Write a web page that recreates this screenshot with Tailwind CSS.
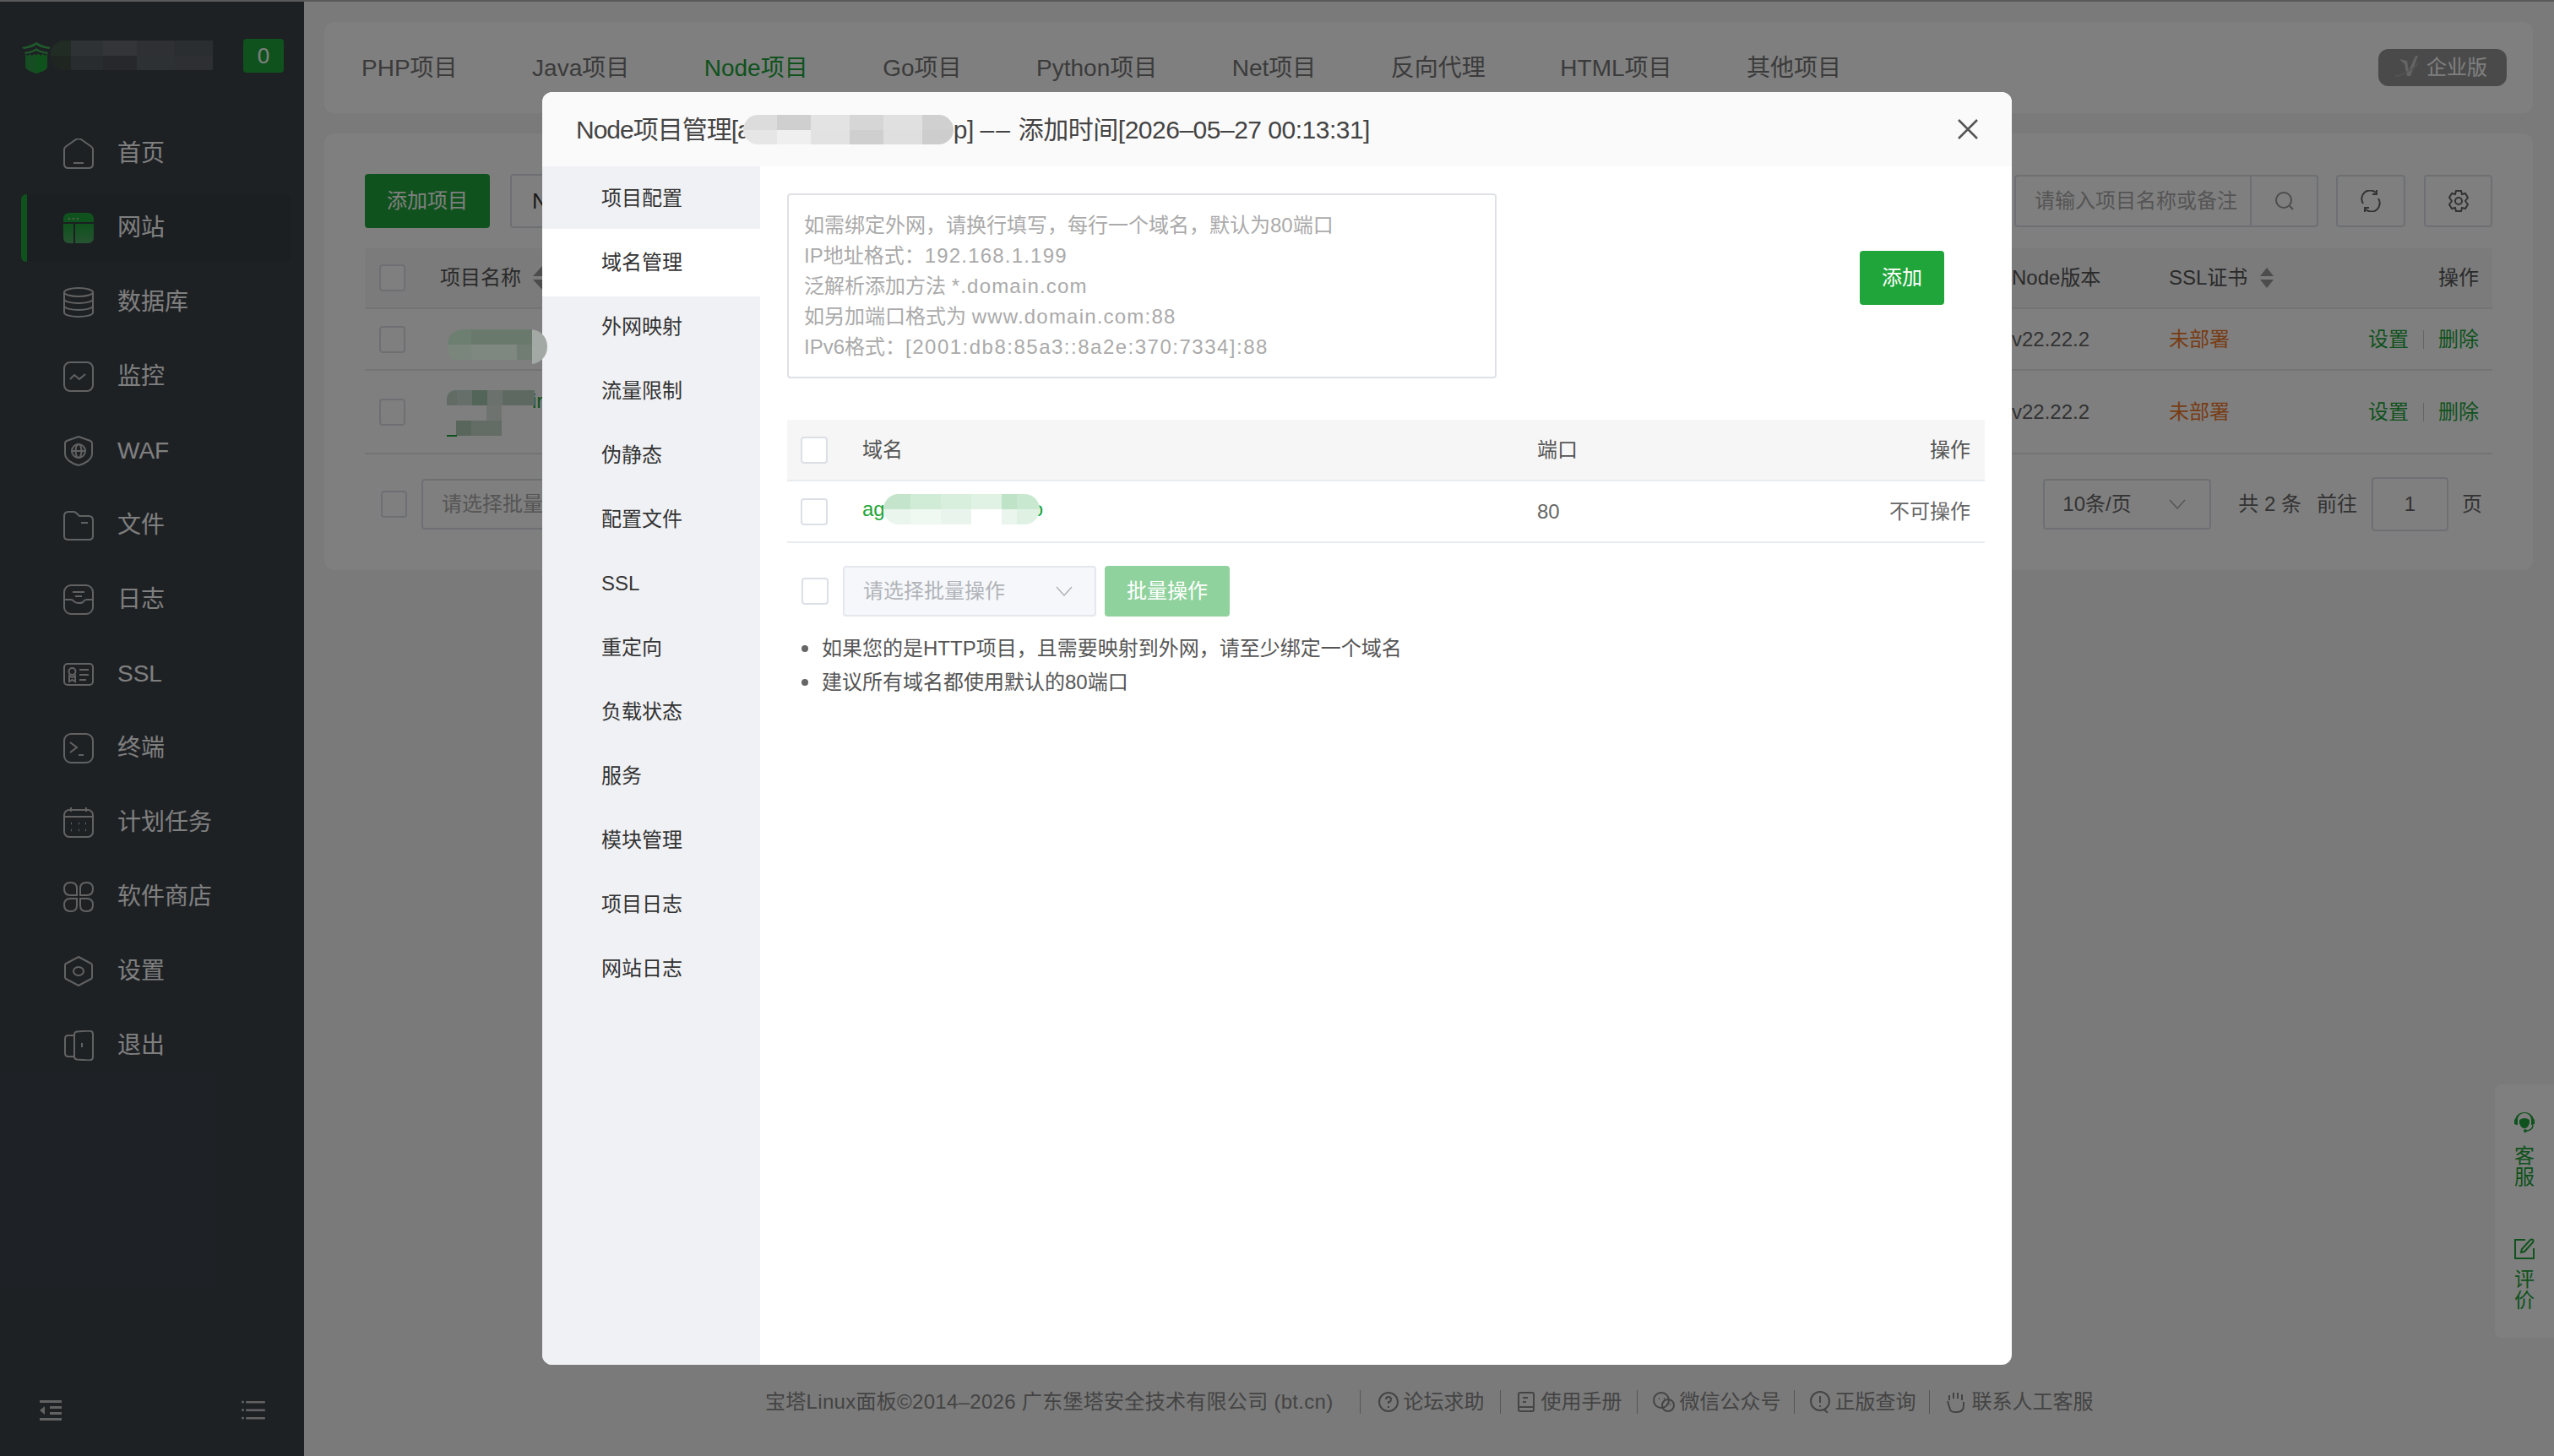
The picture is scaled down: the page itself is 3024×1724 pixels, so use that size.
<!DOCTYPE html>
<html lang="zh-CN">
<head>
  <meta charset="UTF-8" />
  <title>Node项目管理</title>
  <script src="https://cdn.jsdelivr.net/npm/@tailwindcss/browser@4"></script>
</head>
<body class="bg-[#f4f4f4]">
<div class="relative w-[3024px] h-[1724px] overflow-hidden flex font-['Liberation_Sans','Noto_Sans_CJK_SC',sans-serif]">

  <!-- Sidebar -->
  <aside class="w-[360px] h-full shrink-0 bg-[#3c4249] flex flex-col text-white text-[28px]">
    <div class="h-[138px] pl-[25px] pr-[24px] pt-[45px] flex items-start">
      <svg class="w-[36px] h-[42px] shrink-0" viewBox="0 0 36 42">
        <path d="M18 0v5M1 11c7-1 12-3 17-6 5 3 10 5 17 6l-2 2c-6-1-11-2-15-5-4 3-9 4-15 5zM4 17c6-1 10-2 14-5 4 3 8 4 14 5l-1 2c-5-1-9-2-13-4-4 2-8 3-13 4z" fill="#3fb457"/>
        <path d="M5 19l3 2 2-2 3 2 2-2 3 1 3-1 2 2 3-2 2 2 3-2v15c0 3-6 6-13 8-7-2-13-5-13-8z" fill="#2f9a45"/>
        <path d="M18 20l3-1 2 2 3-2 2 2 3-2v15c0 3-6 6-13 8z" fill="#20a53a"/>
      </svg>
      <div class="w-[192px] h-[35px] mt-[3px] -ml-[1px] flex flex-col overflow-hidden rounded-l-[16px]">
        <div class="flex h-[18px]">
          <div class="w-[24px] bg-[#43584b]"></div><div class="w-[38px] bg-[#5f656b]"></div><div class="w-[40px] bg-[#666b71]"></div><div class="w-[44px] bg-[#5c6167]"></div><div class="w-[46px] bg-[#575c62]"></div>
        </div>
        <div class="flex h-[17px]">
          <div class="w-[24px] bg-[#3f4c45]"></div><div class="w-[38px] bg-[#53585e]"></div><div class="w-[40px] bg-[#4c5157]"></div><div class="w-[44px] bg-[#5d6268]"></div><div class="w-[46px] bg-[#5a5f65]"></div>
        </div>
      </div>
      <div class="ml-auto w-[48px] h-[40px] mt-[1px] rounded-[4px] bg-[#20a53a] flex items-center justify-center text-[26px]">0</div>
    </div>

    <nav class="flex flex-col">
      <a class="h-[88px] pl-[75px] flex items-center gap-[28px]">
        <svg class="w-[36px] h-[36px]" viewBox="0 0 36 36" fill="none" stroke="#c4c4c4" stroke-width="2"><path d="M1 13q0-2 2-3.500l12-8.500q3-1.500 6 0l12 8.500q2 1.500 2 3.500v17q0 5-5 5h-24q-5 0-5-5z"/><path d="M12 29h12"/></svg>
        <span>首页</span>
      </a>
      <a class="relative h-[88px] pl-[75px] flex items-center gap-[28px]">
        <div class="absolute left-[25px] top-[4px] w-[7px] h-[80px] rounded-l-[6px] bg-[#20a53a]"></div>
        <div class="absolute left-[32px] top-[4px] w-[312px] h-[80px] rounded-r-[6px] bg-[#383e45]"></div>
        <svg class="relative w-[36px] h-[36px]" viewBox="0 0 36 36"><defs><linearGradient id="gw" x1="0" y1="0" x2="0" y2="1"><stop offset="0" stop-color="#20a53a"/><stop offset="1" stop-color="#4ea663"/></linearGradient></defs><path d="M0 11v-3q0-8 8-8h20q8 0 8 8v3z" fill="#20a53a"/><path d="M0 13h12v23h-5q-7 0-7-7zM14 13h22v16q0 7-7 7h-15z" fill="url(#gw)"/><circle cx="7" cy="7" r="1" fill="#ccc"/><circle cx="12" cy="7" r="1" fill="#ccc"/><circle cx="17" cy="7" r="1" fill="#ccc"/></svg>
        <span class="relative">网站</span>
      </a>
      <a class="h-[88px] pl-[75px] flex items-center gap-[28px]">
        <svg class="w-[36px] h-[36px]" viewBox="0 0 36 36" fill="none" stroke="#c4c4c4" stroke-width="2"><ellipse cx="18" cy="6" rx="17" ry="5"/><path d="M1 6v24c0 3 8 5 17 5s17-2 17-5v-24M1 14c0 3 8 5 17 5s17-2 17-5M1 22c0 3 8 5 17 5s17-2 17-5"/></svg>
        <span>数据库</span>
      </a>
      <a class="h-[88px] pl-[75px] flex items-center gap-[28px]">
        <svg class="w-[36px] h-[36px]" viewBox="0 0 36 36" fill="none" stroke="#c4c4c4" stroke-width="2"><rect x="1" y="1" width="34" height="34" rx="7"/><path d="M8 21l5-5 6 5 7-6"/></svg>
        <span>监控</span>
      </a>
      <a class="h-[88px] pl-[75px] flex items-center gap-[28px]">
        <svg class="w-[36px] h-[36px]" viewBox="0 0 36 36" fill="none" stroke="#c4c4c4" stroke-width="2"><path d="M18 1l14 5q2 1 2 3v12c0 7-8 12-16 14-8-2-16-7-16-14v-12q0-2 2-3z"/><circle cx="18" cy="18" r="8"/><ellipse cx="18" cy="18" rx="3.500" ry="8"/><path d="M10 18h16"/></svg>
        <span>WAF</span>
      </a>
      <a class="h-[88px] pl-[75px] flex items-center gap-[28px]">
        <svg class="w-[36px] h-[36px]" viewBox="0 0 36 36" fill="none" stroke="#c4c4c4" stroke-width="2"><path d="M1 7q0-5 5-5h6q2 0 4 2l3 3h11q5 0 5 5v19q0 4-5 4h-24q-5 0-5-4z"/><path d="M21 15h8"/></svg>
        <span>文件</span>
      </a>
      <a class="h-[88px] pl-[75px] flex items-center gap-[28px]">
        <svg class="w-[36px] h-[36px]" viewBox="0 0 36 36" fill="none" stroke="#c4c4c4" stroke-width="2"><rect x="1" y="1" width="34" height="34" rx="8"/><path d="M1 18h8q2 0 3.500 2t6 2 5.500-2 4-2h7M11 9h14M14 14h8"/></svg>
        <span>日志</span>
      </a>
      <a class="h-[88px] pl-[75px] flex items-center gap-[28px]">
        <svg class="w-[36px] h-[36px]" viewBox="0 0 36 36" fill="none" stroke="#c4c4c4" stroke-width="2"><rect x="1" y="6" width="34" height="25" rx="4"/><circle cx="10.500" cy="15" r="4"/><path d="M7 27v-7l3.500 2 3.500-2v7l-3.500-2zM19 13h11M19 19h11M19 25h8"/></svg>
        <span>SSL</span>
      </a>
      <a class="h-[88px] pl-[75px] flex items-center gap-[28px]">
        <svg class="w-[36px] h-[36px]" viewBox="0 0 36 36" fill="none" stroke="#c4c4c4" stroke-width="2"><rect x="1" y="1" width="34" height="34" rx="8"/><path d="M8 11l8 6-8 6M18 26h6"/></svg>
        <span>终端</span>
      </a>
      <a class="h-[88px] pl-[75px] flex items-center gap-[28px]">
        <svg class="w-[36px] h-[36px]" viewBox="0 0 36 36" fill="none" stroke="#c4c4c4" stroke-width="2"><rect x="1" y="3" width="34" height="32" rx="6"/><path d="M1 11h34M9 0v5M27 0v5"/><path d="M9 19h1M18 19h1M26 19h1M9 27h1M18 27h1M26 27h1" stroke-width="2.500"/></svg>
        <span>计划任务</span>
      </a>
      <a class="h-[88px] pl-[75px] flex items-center gap-[28px]">
        <svg class="w-[36px] h-[36px]" viewBox="0 0 36 36" fill="none" stroke="#c4c4c4" stroke-width="2"><path d="M8 1h1q7 0 7 7v8h-8q-7 0-7-7.500t7-7.500zM28 1h-1q-7 0-7 7v8h8q7 0 7-7.500t-7-7.500zM8 35h1q7 0 7-7v-8h-8q-7 0-7 7.500t7 7.500zM28 35h-1q-7 0-7-7v-8h8q7 0 7 7.500t-7 7.500z"/></svg>
        <span>软件商店</span>
      </a>
      <a class="h-[88px] pl-[75px] flex items-center gap-[28px]">
        <svg class="w-[36px] h-[36px]" viewBox="0 0 36 36" fill="none" stroke="#c4c4c4" stroke-width="2"><path d="M18 1l15 8q1 .5 1 2v14q0 1.500-1 2l-15 8-15-8q-1-.5-1-2v-14q0-1.500 1-2z"/><ellipse cx="18" cy="18" rx="6" ry="5"/></svg>
        <span>设置</span>
      </a>
      <a class="h-[88px] pl-[75px] flex items-center gap-[28px]">
        <svg class="w-[36px] h-[36px]" viewBox="0 0 36 36" fill="none" stroke="#c4c4c4" stroke-width="2"><path d="M13 6h-7q-4 0-4 4v17q0 4 4 4h7"/><path d="M13 5q0-3 3-3.500l14-1q5 0 5 4v27q0 4-5 4l-14-1q-3-.5-3-3z"/><path d="M22 15v5"/></svg>
        <span>退出</span>
      </a>
    </nav>

    <div class="mt-auto h-[66px] pl-[47px] pr-[46px] flex justify-between items-start">
      <svg class="w-[26px] h-[24px]" viewBox="0 0 26 24" fill="#c4c4c4"><rect width="26" height="3"/><rect y="21" width="26" height="3"/><rect x="12" y="7" width="14" height="3"/><rect x="12" y="14" width="14" height="3"/><path d="M6 7v10l-6-5z"/></svg>
      <svg class="w-[28px] h-[24px]" viewBox="0 0 28 24" fill="#c4c4c4"><rect x="5" y="1" width="23" height="2.500" rx="1"/><rect x="5" y="10.500" width="23" height="2.500" rx="1"/><rect x="5" y="20" width="23" height="2.500" rx="1"/><circle cx="1.500" cy="2" r="1.500"/><circle cx="1.500" cy="11.500" r="1.500"/><circle cx="1.500" cy="21" r="1.500"/></svg>
    </div>
  </aside>

  <!-- Page behind the dialog -->
  <main class="flex-1 pl-[24px] pr-[25px] pt-[26px] flex flex-col gap-[24px] text-[24px] text-[#666]">
    <div class="h-[108px] bg-white rounded-[12px] pl-[44px] pr-[31px] flex items-center justify-between">
      <div class="flex gap-[88.5px] pt-[2px] text-[28px] text-[#777]">
        <span>PHP项目</span><span>Java项目</span><span class="text-[#20a53a]">Node项目</span><span>Go项目</span><span>Python项目</span><span>Net项目</span><span>反向代理</span><span>HTML项目</span><span>其他项目</span>
      </div>
      <div class="w-[152px] h-[44px] pr-[4px] rounded-[12px] bg-[#959595] flex items-center justify-center gap-[8px] text-white text-[24px]">
        <svg class="w-[30px] h-[28px]" viewBox="0 0 30 28"><path d="M6 4l9 2 2 12 8-18h3l-9 24h-4l-3-14z" fill="#c8c8c8"/><path d="M1 24c6 0 20-6 27-15" fill="none" stroke="#aaa" stroke-width="1.500"/></svg>
        <span>企业版</span>
      </div>
    </div>

    <div class="h-[517px] bg-white rounded-[12px] px-[48px] pt-[48px]">
      <div class="flex items-center h-[64px]">
        <div class="w-[148px] h-[64px] rounded-[4px] bg-[#20a53a] text-white flex items-center justify-center">添加项目</div>
        <div class="ml-[24px] h-[64px] w-[120px] border-2 border-[#dcdfe6] rounded-[4px] pl-[24px] flex items-center text-[#333] text-[26px]">N</div>
        <div class="ml-auto w-[360px] h-[62px] border-2 border-[#dcdfe6] rounded-[4px] flex items-center">
          <span class="w-[277px] pl-[22px] text-[#aaa]">请输入项目名称或备注</span>
          <div class="flex-1 h-full border-l-2 border-[#dcdfe6] flex items-center justify-center">
            <svg class="w-[24px] h-[24px]" viewBox="0 0 24 24" fill="none" stroke="#999" stroke-width="2"><circle cx="11" cy="11" r="9"/><path d="M18 18l4 4"/></svg>
          </div>
        </div>
        <div class="ml-[21px] w-[82px] h-[62px] border-2 border-[#dcdfe6] rounded-[4px] flex items-center justify-center">
          <svg class="w-[26px] h-[26px]" viewBox="0 0 26 26" fill="none" stroke="#666" stroke-width="2"><path d="M4 16a10 10 0 0 1 15-13M22 10a10 10 0 0 1-15 13"/><path d="M20 0v5h-5M6 26v-5h5"/></svg>
        </div>
        <div class="ml-[22px] w-[81px] h-[62px] border-2 border-[#dcdfe6] rounded-[4px] flex items-center justify-center">
          <svg class="w-[28px] h-[28px]" viewBox="0 0 28 28" fill="none" stroke="#666" stroke-width="2"><path d="M11 2h6l1 4 4-1 3 5-3 4 3 4-3 5-4-1-1 4h-6l-1-4-4 1-3-5 3-4-3-4 3-5 4 1z"/><circle cx="14" cy="14" r="4"/></svg>
        </div>
      </div>

      <div class="mt-[24px] h-[72px] bg-[#f6f6f6] border-b-2 border-[#e9e9ee] grid grid-cols-[89px_1861px_186px_1fr_auto] items-center text-[#555]">
        <div class="pl-[17px]"><div class="w-[31px] h-[32px] border-2 border-[#dcdfe6] rounded-[4px] bg-white"></div></div>
        <span class="flex items-center gap-[13px]">项目名称
          <svg class="w-[24px] h-[28px]" viewBox="0 0 24 28" fill="#999"><path d="M12 0l11 12h-22zM12 28l-11-12h22z"/></svg>
        </span>
        <span>Node版本</span>
        <span class="flex items-center gap-[14px]">SSL证书
          <svg class="w-[18px] h-[24px]" viewBox="0 0 18 24" fill="#999"><path d="M9 0l8 10h-16zM9 24l-8-10h16z"/></svg>
        </span>
        <span class="pr-[16px]">操作</span>
      </div>
      <div class="h-[73px] border-b-2 border-[#e9e9ee] grid grid-cols-[89px_1861px_186px_1fr_auto] items-center">
        <div class="pl-[17px]"><div class="w-[31px] h-[32px] border-2 border-[#dcdfe6] rounded-[4px]"></div></div>
        <span></span><span>v22.22.2</span><span class="text-[#f0782a]">未部署</span>
        <span class="pr-[16px] text-[#20a53a] flex items-center">设置<i class="mx-[17px] w-px h-[22px] bg-[#ccc]"></i>删除</span>
      </div>
      <div class="h-[99px] border-b-2 border-[#e9e9ee] grid grid-cols-[89px_1861px_186px_1fr_auto] items-center">
        <div class="pl-[17px]"><div class="w-[31px] h-[32px] border-2 border-[#dcdfe6] rounded-[4px]"></div></div>
        <div class="relative h-full">
          <span class="absolute left-[109px] top-[18px] text-[#20a53a]">ir</span>
          <div class="absolute left-[8px] top-[23px] w-[104px] h-[18px] flex overflow-hidden rounded-tl-[10px]">
            <div class="w-[12px] bg-[#c4d8c9]"></div><div class="w-[18px] bg-[#cddfd2]"></div><div class="w-[18px] bg-[#a7cbb1]"></div><div class="w-[18px] bg-[#d6e4da]"></div><div class="w-[38px] bg-[#bdd4c3]"></div>
          </div>
          <div class="absolute left-[55px] top-[41px] w-[18px] h-[18px] bg-[#dee7e0]"></div>
          <div class="absolute left-[19px] top-[59px] w-[54px] h-[18px] flex"><div class="w-[18px] bg-[#b2ccb9]"></div><div class="w-[36px] bg-[#c6d9cb]"></div></div>
          <div class="absolute left-[8px] top-[76px] w-[12px] h-[2px] bg-[#20a53a]"></div>
        </div>
        <span>v22.22.2</span><span class="text-[#f0782a]">未部署</span>
        <span class="pr-[16px] text-[#20a53a] flex items-center">设置<i class="mx-[17px] w-px h-[22px] bg-[#ccc]"></i>删除</span>
      </div>

      <div class="mt-[27px] flex items-center">
        <div class="ml-[19px] w-[31px] h-[32px] border-2 border-[#dcdfe6] rounded-[4px]"></div>
        <div class="ml-[17px] w-[300px] h-[60px] border-2 border-[#dcdfe6] rounded-[4px] pl-[22px] flex items-center text-[#aaa]">请选择批量操作</div>
        <div class="ml-auto w-[199px] h-[60px] border-2 border-[#dcdfe6] rounded-[4px] pl-[21px] pr-[28px] flex items-center justify-between">
          <span>10条/页</span>
          <svg class="w-[20px] h-[12px]" viewBox="0 0 20 12" fill="none" stroke="#aaa" stroke-width="1.500"><path d="M1 1l9 10 9-10"/></svg>
        </div>
        <span class="ml-[32px]">共 2 条</span>
        <span class="ml-[18px]">前往</span>
        <div class="ml-[17px] w-[91px] h-[64px] border-2 border-[#dcdfe6] rounded-[4px] flex items-center justify-center">1</div>
        <span class="ml-[16px] mr-[12px]">页</span>
      </div>
    </div>

    <!-- Footer -->
    <div class="mt-auto h-[78px] pl-[522px] flex items-start text-[#888]">
      <span class="tracking-[0.3px] h-[28px] flex items-center">宝塔Linux面板©2014&#8211;2026 广东堡塔安全技术有限公司 (bt.cn)</span>
      <span class="ml-[31px] h-[28px] border-l border-[#aaa] pl-[21px] flex items-center gap-[6px]">
        <svg class="w-[24px] h-[24px]" viewBox="0 0 24 24" fill="none" stroke="#888" stroke-width="2"><circle cx="12" cy="12" r="11"/><path d="M9 9q0-3 3-3t3 3-3 3v2M12 17v2"/></svg>论坛求助</span>
      <span class="ml-[18px] h-[28px] border-l border-[#aaa] pl-[20px] flex items-center gap-[8px]">
        <svg class="w-[20px] h-[24px]" viewBox="0 0 20 24" fill="none" stroke="#888" stroke-width="2"><rect x="1" y="1" width="18" height="22" rx="2"/><path d="M1 18h18M6 7h6M6 12h4"/></svg>使用手册</span>
      <span class="ml-[17px] h-[28px] border-l border-[#aaa] pl-[18px] flex items-center gap-[6px]">
        <svg class="w-[26px] h-[24px]" viewBox="0 0 26 24" fill="none" stroke="#888" stroke-width="2"><circle cx="10" cy="10" r="9"/><circle cx="18" cy="16" r="7"/><path d="M7 8h1M13 8h1M16 15h1M20 15h1"/></svg>微信公众号</span>
      <span class="ml-[15px] h-[28px] border-l border-[#aaa] pl-[18px] flex items-center gap-[6px]">
        <svg class="w-[24px] h-[26px]" viewBox="0 0 24 26" fill="none" stroke="#888" stroke-width="2"><circle cx="12" cy="12" r="11"/><path d="M12 6v8M12 17v2M17 22l4 4"/></svg>正版查询</span>
      <span class="ml-[15px] h-[28px] border-l border-[#aaa] pl-[18px] flex items-center gap-[6px]">
        <svg class="w-[26px] h-[26px]" viewBox="0 0 26 26" fill="none" stroke="#888" stroke-width="2"><path d="M5 11v-6M10 9v-7M15 9v-7M20 11v-7M3 12l3 10q1 3 6 3h2q8 0 8-8v-4"/></svg>联系人工客服</span>
    </div>

    <!-- Floating side tab -->
    <div class="absolute right-0 top-[1284px] w-[70px] h-[300px] bg-white rounded-l-[8px] pt-[32px] flex flex-col items-center text-[24px] leading-[25px] text-[#20a53a]">
      <svg class="w-[26px] h-[26px]" viewBox="0 0 26 26"><path d="M13 1a12 12 0 0 0-11 8l-1 1v5l3 1h1v-6a8 8 0 0 1 16 0v6h1l3-1v-5l-1-1a12 12 0 0 0-11-8z" fill="#20a53a"/><path d="M7 10q6-4 12 0v4q-2 6-6 6t-6-6z" fill="#20a53a"/><path d="M23 16q0 6-7 7" fill="none" stroke="#20a53a" stroke-width="1.500"/><circle cx="14" cy="23" r="2" fill="#20a53a"/></svg>
      <span class="mt-[14px]">客</span><span>服</span>
      <svg class="mt-[60px] w-[26px] h-[26px]" viewBox="0 0 26 26" fill="none" stroke="#20a53a" stroke-width="2"><path d="M14 2h-12v22h22v-12"/><path d="M9 17l1-4 10-11q2-1 3 0t0 3l-10 11z"/></svg>
      <span class="mt-[10px]">评</span><span>价</span>
    </div>
  </main>

  <!-- Dim layer -->
  <div class="absolute inset-0 bg-black/50"></div>
  <div class="absolute left-0 top-0 w-full h-[2px] bg-[#5a5a5a]"></div>

  <!-- Blur over the first project name, it overlaps the dialog -->
  <div class="absolute z-20 left-[530px] top-[390px] w-[118px] h-[41px] rounded-r-[20px] rounded-l-[18px] overflow-hidden flex">
    <div class="w-[100px] flex flex-col">
      <div class="flex h-[18px]"><div class="w-[28px] bg-[#6d7f71]"></div><div class="w-[72px] bg-[#697a6d]"></div></div>
      <div class="flex h-[18px]"><div class="w-[28px] bg-[#7a857c]"></div><div class="w-[54px] bg-[#7f8880]"></div><div class="w-[18px] bg-[#717d73]"></div></div>
    </div>
    <div class="flex-1 bg-[#a3a9a4]"></div>
  </div>

  <!-- Dialog -->
  <div class="absolute z-10 left-[642px] top-[109px] w-[1740px] h-[1507px] bg-white rounded-[12px] overflow-hidden flex flex-col">
    <div class="h-[88px] shrink-0 bg-[#fafafa] pl-[40px] pr-[40px] flex items-center justify-between text-[30px] text-[#444]">
      <div class="flex items-center">
        <span class="tracking-[-1px]">Node项目管理[a</span>
        <div class="-ml-[9px] w-[249px] h-[35px] rounded-[18px] overflow-hidden flex flex-col">
          <div class="flex h-[18px]"><div class="w-[40px] bg-[#dcdcdc]"></div><div class="w-[40px] bg-[#cfcfcf]"></div><div class="w-[46px] bg-[#e3e3e3]"></div><div class="w-[40px] bg-[#d6d6d6]"></div><div class="w-[46px] bg-[#e0e0e0]"></div><div class="w-[37px] bg-[#d0d0d0]"></div></div>
          <div class="flex h-[17px]"><div class="w-[40px] bg-[#e6e6e6]"></div><div class="w-[40px] bg-[#efefef]"></div><div class="w-[46px] bg-[#e2e2e2]"></div><div class="w-[40px] bg-[#cfcfcf]"></div><div class="w-[46px] bg-[#dfdfdf]"></div><div class="w-[37px] bg-[#cdcdcd]"></div></div>
        </div>
        <span class="tracking-[-0.5px]">p] <span class="tracking-[2px]">&#8211;&#8211;</span> 添加时间[2026&#8211;05&#8211;27 00:13:31]</span>
      </div>
      <svg class="w-[24px] h-[24px]" viewBox="0 0 24 24" fill="none" stroke="#555" stroke-width="2.500"><path d="M1 1l22 22M23 1l-22 22"/></svg>
    </div>

    <div class="flex flex-1 min-h-0">
      <nav class="w-[258px] shrink-0 bg-[#f0f1f4] flex flex-col text-[24px] text-[#333]">
        <a class="h-[76px] pl-[70px] flex items-center">项目配置</a>
        <a class="relative -my-[2px] h-[80px] pl-[70px] flex items-center bg-white">域名管理</a>
        <a class="h-[76px] pl-[70px] flex items-center">外网映射</a>
        <a class="h-[76px] pl-[70px] flex items-center">流量限制</a>
        <a class="h-[76px] pl-[70px] flex items-center">伪静态</a>
        <a class="h-[76px] pl-[70px] flex items-center">配置文件</a>
        <a class="h-[76px] pl-[70px] flex items-center">SSL</a>
        <a class="h-[76px] pl-[70px] flex items-center">重定向</a>
        <a class="h-[76px] pl-[70px] flex items-center">负载状态</a>
        <a class="h-[76px] pl-[70px] flex items-center">服务</a>
        <a class="h-[76px] pl-[70px] flex items-center">模块管理</a>
        <a class="h-[76px] pl-[70px] flex items-center">项目日志</a>
        <a class="h-[76px] pl-[70px] flex items-center">网站日志</a>
      </nav>

      <section class="flex-1 pl-[32px] pr-[32px] pt-[32px] text-[24px] text-[#666]">
        <div class="flex items-start justify-between">
          <div class="w-[840px] h-[219px] border-2 border-[#dfe1e6] rounded-[4px] pl-[18px] pt-[18px] text-[#aaa] leading-[36px]">
            <p>如需绑定外网&#65292;请换行填写&#65292;每行一个域名&#65292;默认为80端口</p>
            <p>IP地址格式&#65306;<span class="tracking-[1.2px]">192.168.1.199</span></p>
            <p>泛解析添加方法 <span class="tracking-[1.2px]">*.domain.com</span></p>
            <p>如另加端口格式为 <span class="tracking-[1.2px]">www.domain.com:88</span></p>
            <p>IPv6格式&#65306;<span class="tracking-[1.5px]">[2001:db8:85a3::8a2e:370:7334]:88</span></p>
          </div>
          <div class="mt-[68px] mr-[48px] w-[100px] h-[64px] rounded-[4px] bg-[#20a53a] text-white flex items-center justify-center">添加</div>
        </div>

        <div class="mt-[49px] h-[73px] bg-[#f6f6f6] border-b-2 border-[#e9ecef] grid grid-cols-[89px_799px_1fr_auto] items-center text-[#555]">
          <div class="pl-[16px]"><div class="w-[32px] h-[32px] border-2 border-[#dcdfe6] rounded-[4px] bg-white"></div></div>
          <span>域名</span><span>端口</span><span class="pr-[17px]">操作</span>
        </div>
        <div class="h-[73px] border-b-2 border-[#e9ecef] grid grid-cols-[89px_799px_1fr_auto] items-center">
          <div class="pl-[16px]"><div class="w-[32px] h-[32px] border-2 border-[#dcdfe6] rounded-[4px]"></div></div>
          <div class="flex items-center -mt-[6px] text-[#20a53a]">
            <span>ag</span>
            <div class="relative z-10 -ml-[2px] w-[185px] h-[36px] rounded-[18px] overflow-hidden flex flex-col">
              <div class="flex h-[18px]"><div class="w-[32px] bg-[#c4e5cb]"></div><div class="w-[36px] bg-[#d0ebd6]"></div><div class="w-[36px] bg-[#d9efde]"></div><div class="w-[36px] bg-[#e0f2e4]"></div><div class="w-[18px] bg-[#bfe3c7]"></div><div class="w-[27px] bg-[#c9e8d0]"></div></div>
              <div class="flex h-[18px]"><div class="w-[32px] bg-[#eaf6ed]"></div><div class="w-[36px] bg-[#f0f8f2]"></div><div class="w-[36px] bg-[#e9f5ec]"></div><div class="w-[36px] bg-[#ffffff]"></div><div class="w-[18px] bg-[#eaf6ed]"></div><div class="w-[27px] bg-[#dff1e3]"></div></div>
            </div>
            <span class="-ml-[9px]">o</span>
          </div>
          <span>80</span><span class="pr-[17px]">不可操作</span>
        </div>

        <div class="mt-[27px] flex items-center">
          <div class="ml-[17px] w-[32px] h-[32px] border-2 border-[#dcdfe6] rounded-[4px]"></div>
          <div class="ml-[17px] w-[300px] h-[60px] bg-[#f5f7fa] border-2 border-[#e4e7ed] rounded-[4px] pl-[22px] pr-[26px] flex items-center justify-between text-[#b0b3b8]">
            <span>请选择批量操作</span>
            <svg class="w-[20px] h-[12px]" viewBox="0 0 20 12" fill="none" stroke="#b0b3b8" stroke-width="1.500"><path d="M1 1l9 10 9-10"/></svg>
          </div>
          <div class="ml-[10px] w-[148px] h-[60px] rounded-[4px] bg-[#90d29d] text-white flex items-center justify-center">批量操作</div>
        </div>

        <ul class="mt-[18px] leading-[40px] text-[#555]">
          <li class="flex items-center"><i class="ml-[17px] mr-[16px] w-[8px] h-[8px] rounded-full bg-[#666]"></i>如果您的是HTTP项目&#65292;且需要映射到外网&#65292;请至少绑定一个域名</li>
          <li class="flex items-center"><i class="ml-[17px] mr-[16px] w-[8px] h-[8px] rounded-full bg-[#666]"></i>建议所有域名都使用默认的80端口</li>
        </ul>
      </section>
    </div>
  </div>
</div>
</body>
</html>
